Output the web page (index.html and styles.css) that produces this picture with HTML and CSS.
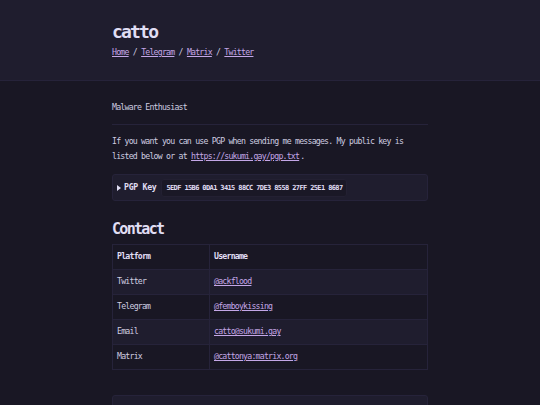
FILE: index.html
```html
<!DOCTYPE html>
<html lang="en">
<head>
<meta charset="utf-8">
<title>catto</title>
<link rel="stylesheet" href="styles.css">
</head>
<body>
<header class="site-header">
  <div class="wrap">
    <h1 class="title">catto</h1>
    <nav class="nav"><a href="#">Home</a> / <a href="#">Telegram</a> / <a href="#">Matrix</a> / <a href="#">Twitter</a></nav>
  </div>
</header>
<main class="wrap main">
  <p class="tagline">Malware Enthusiast</p>
  <hr class="rule">
  <p class="text">If you want you can use PGP when sending me messages. My public key is listed below or at <a class="inline-link" href="#">https://sukumi.gay/pgp.txt</a>.</p>
  <details class="pgp">
    <summary class="pgp-summary"><span class="arrow"></span><span class="pgp-label">PGP Key</span><code class="fpr">5EDF 15B6 0DA1 3415 88CC 7DE3 8558 27FF 25E1 8687</code></summary>
  </details>
  <h2 class="heading">Contact</h2>
  <table class="contacts">
    <thead>
      <tr><th class="col1">Platform</th><th>Username</th></tr>
    </thead>
    <tbody>
      <tr><td>Twitter</td><td><a href="#">@ackflood</a></td></tr>
      <tr><td>Telegram</td><td><a href="#">@femboykissing</a></td></tr>
      <tr><td>Email</td><td><a href="#">catto@sukumi.gay</a></td></tr>
      <tr><td>Matrix</td><td><a href="#">@cattonya:matrix.org</a></td></tr>
    </tbody>
  </table>
  <div class="next-box"></div>
</main>
</body>
</html>
```
FILE: styles.css
```css
html, body {
  margin: 0;
  padding: 0;
  background: #191724;
}
body {
  font-family: "DejaVu Sans Mono", monospace;
  font-size: 8.2px;
  line-height: 15px;
  letter-spacing: -0.77px;
  color: #cfcde0;
  overflow: hidden;
  height: 405px;
}
a {
  color: #c4a7e7;
  text-decoration: underline;
}
.inline-link {
  margin-right: 1px;
}
.wrap {
  width: 316px;
  margin: 0 auto;
}
.site-header {
  background: #1f1d2e;
  border-bottom: 1px solid #26233a;
  padding: 22px 0 20px;
}
.title {
  margin: 0;
  font-size: 18px;
  line-height: 20px;
  letter-spacing: -1.8px;
  font-weight: bold;
  color: #e0def4;
}
.nav {
  margin-top: 3px;
  line-height: 15px;
}
.main {
  padding-top: 19px;
}
.tagline {
  margin: 0;
}
.rule {
  border: 0;
  border-top: 1px solid #26233a;
  margin: 9px 0 9px;
  height: 0;
}
.text {
  margin: 0;
}
.pgp {
  margin-top: 10px;
  background: #1f1d2e;
  border: 1px solid #26233a;
  border-radius: 3px;
}
.pgp-summary {
  list-style: none;
  display: flex;
  align-items: center;
  height: 25px;
  padding: 0 4px;
}
.pgp-summary::-webkit-details-marker {
  display: none;
}
.arrow {
  width: 0;
  height: 0;
  border-left: 4px solid #e0def4;
  border-top: 3px solid transparent;
  border-bottom: 3px solid transparent;
  margin-right: 3px;
}
.pgp-label {
  font-weight: bold;
  letter-spacing: -0.3px;
  color: #e0def4;
}
.fpr {
  font-family: "DejaVu Sans Mono", monospace;
  font-size: 7px;
  font-weight: bold;
  letter-spacing: -0.62px;
  line-height: 14px;
  background: #1a1826;
  border: 1px solid #232032;
  border-radius: 3px;
  padding: 1px 3px 1px 4px;
  margin-left: 5px;
  color: #e0def4;
}
.heading {
  margin: 19px 0 6px;
  font-size: 15px;
  line-height: 18px;
  letter-spacing: -1.7px;
  font-weight: bold;
  color: #e0def4;
}
.contacts {
  width: 100%;
  border-collapse: collapse;
  border: 1px solid #26233a;
}
.contacts th,
.contacts td {
  border: 1px solid #26233a;
  padding: 4px 4px 5px;
  height: 15px;
  text-align: left;
  vertical-align: middle;
}
.contacts th {
  font-weight: bold;
  color: #e0def4;
}
.col1 {
  width: 88px;
}
.contacts tbody tr:nth-child(odd) {
  background: #1f1d2e;
}
.next-box {
  margin-top: 25px;
  height: 40px;
  background: #1f1d2e;
  border: 1px solid #26233a;
  border-radius: 3px;
}
```
